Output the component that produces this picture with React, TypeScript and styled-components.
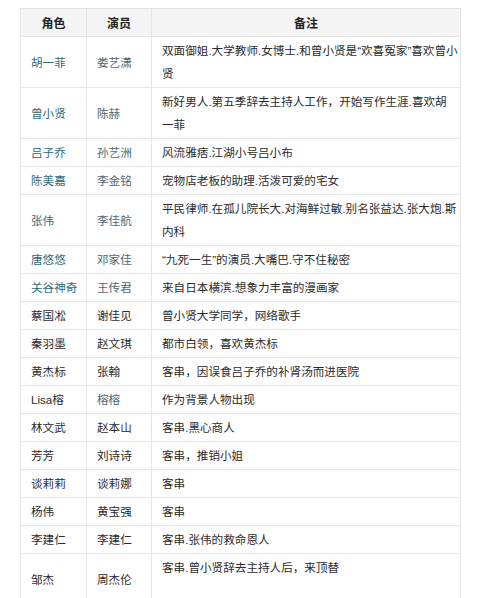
import React from "react";
import styled, { createGlobalStyle } from "styled-components";

const Global = createGlobalStyle`
  html, body { margin: 0; padding: 0; background: #ffffff; }
  body { font-family: "Liberation Sans", "Noto Sans CJK SC", sans-serif; }
`;

const Page = styled.div`
  width: 500px;
  height: 598px;
  padding: 8px 0 0 20px;
  box-sizing: border-box;
  background: #ffffff;
  overflow: hidden;
`;

const Table = styled.table`
  width: 440px;
  border-collapse: collapse;
  table-layout: fixed;
  font-family: "Liberation Sans", "Noto Sans CJK SC", sans-serif;
  font-size: 11.6px;
  color: #2b2b2b;
`;

const HeadCell = styled.th`
  background: #f5f5f5;
  border: 1px solid #e4e4e4;
  height: 27px;
  padding: 0;
  font-weight: bold;
  font-size: 12px;
  color: #222;
  text-align: center;
  vertical-align: middle;
`;

const Cell = styled.td<{ $tone?: "link" | "soft" | "plain" }>`
  border: 1px solid #e6e6e6;
  padding: 2px 0 2px 10px;
  line-height: 23px;
  vertical-align: middle;
  white-space: nowrap;
  overflow: hidden;
  color: ${(p) =>
    p.$tone === "link" ? "#2f6b78" : p.$tone === "soft" ? "#4d6970" : "#2b2b2b"};
`;

type Row = {
  role: string;
  actor: string;
  note: string[];
  roleTeal?: boolean;
  actorTeal?: boolean;
};

const rows: Row[] = [
  { role: "胡一菲", actor: "娄艺潇", note: ["双面御姐.大学教师.女博士.和曾小贤是“欢喜冤家”喜欢曾小", "贤"], roleTeal: true, actorTeal: true },
  { role: "曾小贤", actor: "陈赫", note: ["新好男人.第五季辞去主持人工作，开始写作生涯.喜欢胡", "一菲"], roleTeal: true, actorTeal: true },
  { role: "吕子乔", actor: "孙艺洲", note: ["风流雅痞.江湖小号吕小布"], roleTeal: true, actorTeal: true },
  { role: "陈美嘉", actor: "李金铭", note: ["宠物店老板的助理.活泼可爱的宅女"], roleTeal: true, actorTeal: true },
  { role: "张伟", actor: "李佳航", note: ["平民律师.在孤儿院长大.对海鲜过敏.别名张益达.张大炮.斯", "内科"], roleTeal: true, actorTeal: true },
  { role: "唐悠悠", actor: "邓家佳", note: ["“九死一生”的演员.大嘴巴.守不住秘密"], roleTeal: true, actorTeal: true },
  { role: "关谷神奇", actor: "王传君", note: ["来自日本横滨.想象力丰富的漫画家"], roleTeal: true, actorTeal: true },
  { role: "蔡国凇", actor: "谢佳见", note: ["曾小贤大学同学，网络歌手"] },
  { role: "秦羽墨", actor: "赵文琪", note: ["都市白领，喜欢黄杰标"] },
  { role: "黄杰标", actor: "张翰", note: ["客串，因误食吕子乔的补肾汤而进医院"] },
  { role: "Lisa榕", actor: "榕榕", note: ["作为背景人物出现"], actorTeal: true },
  { role: "林文武", actor: "赵本山", note: ["客串.黑心商人"] },
  { role: "芳芳", actor: "刘诗诗", note: ["客串，推销小姐"] },
  { role: "谈莉莉", actor: "谈莉娜", note: ["客串"] },
  { role: "杨伟", actor: "黄宝强", note: ["客串"] },
  { role: "李建仁", actor: "李建仁", note: ["客串.张伟的救命恩人"] },
  { role: "邹杰", actor: "周杰伦", note: ["客串.曾小贤辞去主持人后，来顶替", "\u00a0"] },
];

export default function App() {
  return (
    <Page>
      <Global />
      <Table>
        <colgroup>
          <col style={{ width: 66 }} />
          <col style={{ width: 65 }} />
          <col style={{ width: 309 }} />
        </colgroup>
        <thead>
          <tr>
            <HeadCell>角色</HeadCell>
            <HeadCell>演员</HeadCell>
            <HeadCell>备注</HeadCell>
          </tr>
        </thead>
        <tbody>
          {rows.map((r, i) => (
            <tr key={i}>
              <Cell $tone={r.roleTeal ? "link" : "plain"}>{r.role}</Cell>
              <Cell $tone={r.actorTeal ? "soft" : "plain"}>{r.actor}</Cell>
              <Cell $tone="plain">
                {r.note.map((line, j) => (
                  <React.Fragment key={j}>
                    {j > 0 && <br />}
                    {line}
                  </React.Fragment>
                ))}
              </Cell>
            </tr>
          ))}
        </tbody>
      </Table>
    </Page>
  );
}
